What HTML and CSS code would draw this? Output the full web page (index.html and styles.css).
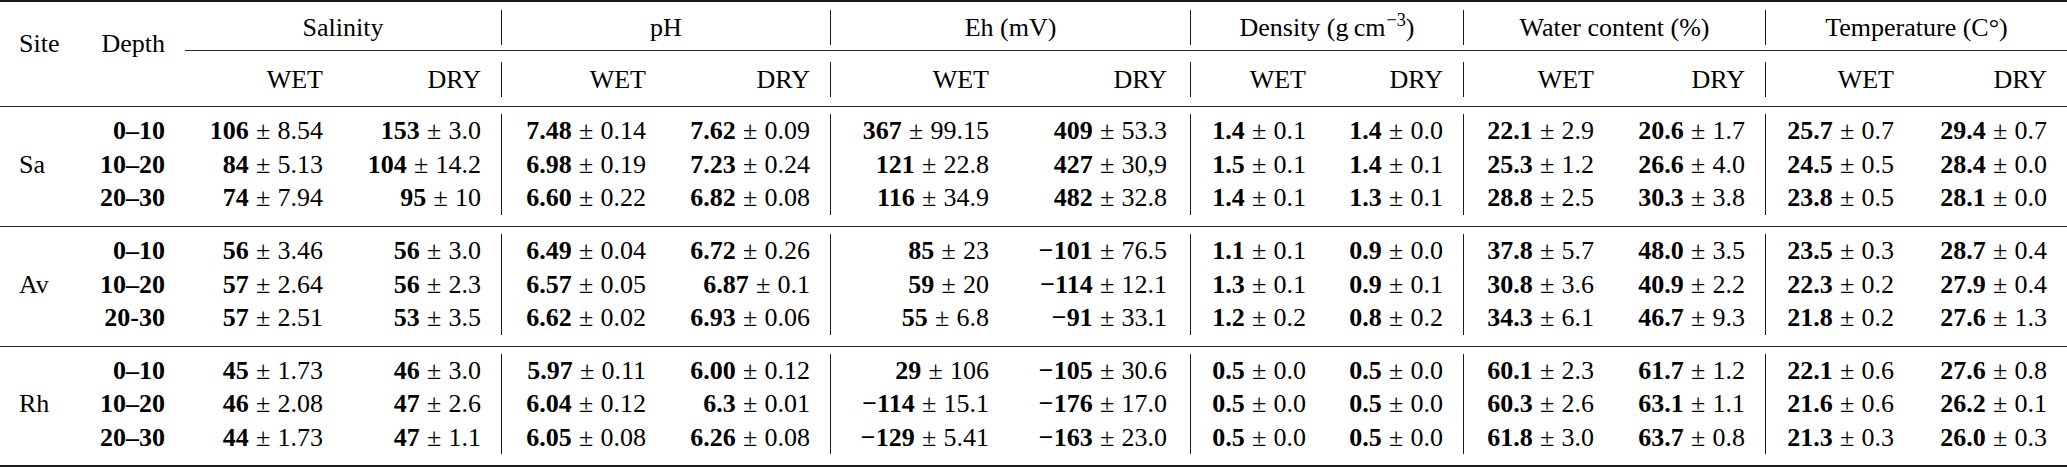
FILE: index.html
```html
<!DOCTYPE html>
<html lang="en">
<head>
<meta charset="utf-8">
<title>Soil parameters</title>
<link rel="stylesheet" href="styles.css">
</head>
<body>
<table class="tbl">
  <colgroup>
    <col class="w-site"><col class="w-depth">
    <col class="w-sal-w"><col class="w-sal-d">
    <col class="w-ph-w"><col class="w-ph-d">
    <col class="w-eh-w"><col class="w-eh-d">
    <col class="w-den-w"><col class="w-den-d">
    <col class="w-wat-w"><col class="w-wat-d">
    <col class="w-tmp-w"><col class="w-tmp-d">
  </colgroup>
  <thead>
    <tr class="rule rule-heavy"><td colspan="14"></td></tr>
    <tr class="gap gap-8"><td colspan="14"></td></tr>
    <tr class="head-1">
      <th rowspan="5" class="stub site">Site</th>
      <th rowspan="5" class="stub">Depth</th>
      <th colspan="2" class="group">Salinity</th>
      <th colspan="2" class="group vl">pH</th>
      <th colspan="2" class="group vl">Eh (mV)</th>
      <th colspan="2" class="group vl">Density (g&#8201;cm<sup>−3</sup>)</th>
      <th colspan="2" class="group vl">Water content (%)</th>
      <th colspan="2" class="group vl">Temperature (C°)</th>
    </tr>
    <tr class="gap gap-5"><td colspan="12"></td></tr>
    <tr class="rule rule-thin"><td colspan="12"></td></tr>
    <tr class="gap gap-11"><td colspan="12"></td></tr>
    <tr class="head-2">
      <th>WET</th><th>DRY</th>
      <th class="vl">WET</th><th>DRY</th>
      <th class="vl">WET</th><th class="eh-d">DRY</th>
      <th class="vl">WET</th><th>DRY</th>
      <th class="vl">WET</th><th>DRY</th>
      <th class="vl">WET</th><th>DRY</th>
    </tr>
    <tr class="gap gap-9"><td colspan="14"></td></tr>
  </thead>

  <tbody>
    <tr class="rule rule-mid"><td colspan="14"></td></tr>
    <tr class="gap gap-7"><td colspan="14"></td></tr>
    <tr>
      <td class="site"></td><td><b>0–10</b></td>
      <td><b>106</b><span class="pm">±</span>8.54</td><td><b>153</b><span class="pm">±</span>3.0</td>
      <td class="vl"><b>7.48</b><span class="pm">±</span>0.14</td><td><b>7.62</b><span class="pm">±</span>0.09</td>
      <td class="vl"><b>367</b><span class="pm">±</span>99.15</td><td class="eh-d"><b>409</b><span class="pm">±</span>53.3</td>
      <td class="vl"><b>1.4</b><span class="pm">±</span>0.1</td><td><b>1.4</b><span class="pm">±</span>0.0</td>
      <td class="vl"><b>22.1</b><span class="pm">±</span>2.9</td><td><b>20.6</b><span class="pm">±</span>1.7</td>
      <td class="vl"><b>25.7</b><span class="pm">±</span>0.7</td><td><b>29.4</b><span class="pm">±</span>0.7</td>
    </tr>
    <tr>
      <td class="site">Sa</td><td><b>10–20</b></td>
      <td><b>84</b><span class="pm">±</span>5.13</td><td><b>104</b><span class="pm">±</span>14.2</td>
      <td class="vl"><b>6.98</b><span class="pm">±</span>0.19</td><td><b>7.23</b><span class="pm">±</span>0.24</td>
      <td class="vl"><b>121</b><span class="pm">±</span>22.8</td><td class="eh-d"><b>427</b><span class="pm">±</span>30,9</td>
      <td class="vl"><b>1.5</b><span class="pm">±</span>0.1</td><td><b>1.4</b><span class="pm">±</span>0.1</td>
      <td class="vl"><b>25.3</b><span class="pm">±</span>1.2</td><td><b>26.6</b><span class="pm">±</span>4.0</td>
      <td class="vl"><b>24.5</b><span class="pm">±</span>0.5</td><td><b>28.4</b><span class="pm">±</span>0.0</td>
    </tr>
    <tr>
      <td class="site"></td><td><b>20–30</b></td>
      <td><b>74</b><span class="pm">±</span>7.94</td><td><b>95</b><span class="pm">±</span>10</td>
      <td class="vl"><b>6.60</b><span class="pm">±</span>0.22</td><td><b>6.82</b><span class="pm">±</span>0.08</td>
      <td class="vl"><b>116</b><span class="pm">±</span>34.9</td><td class="eh-d"><b>482</b><span class="pm">±</span>32.8</td>
      <td class="vl"><b>1.4</b><span class="pm">±</span>0.1</td><td><b>1.3</b><span class="pm">±</span>0.1</td>
      <td class="vl"><b>28.8</b><span class="pm">±</span>2.5</td><td><b>30.3</b><span class="pm">±</span>3.8</td>
      <td class="vl"><b>23.8</b><span class="pm">±</span>0.5</td><td><b>28.1</b><span class="pm">±</span>0.0</td>
    </tr>
    <tr class="gap gap-11"><td colspan="14"></td></tr>
  </tbody>

  <tbody>
    <tr class="rule rule-mid"><td colspan="14"></td></tr>
    <tr class="gap gap-7"><td colspan="14"></td></tr>
    <tr>
      <td class="site"></td><td><b>0–10</b></td>
      <td><b>56</b><span class="pm">±</span>3.46</td><td><b>56</b><span class="pm">±</span>3.0</td>
      <td class="vl"><b>6.49</b><span class="pm">±</span>0.04</td><td><b>6.72</b><span class="pm">±</span>0.26</td>
      <td class="vl"><b>85</b><span class="pm">±</span>23</td><td class="eh-d"><b>−101</b><span class="pm">±</span>76.5</td>
      <td class="vl"><b>1.1</b><span class="pm">±</span>0.1</td><td><b>0.9</b><span class="pm">±</span>0.0</td>
      <td class="vl"><b>37.8</b><span class="pm">±</span>5.7</td><td><b>48.0</b><span class="pm">±</span>3.5</td>
      <td class="vl"><b>23.5</b><span class="pm">±</span>0.3</td><td><b>28.7</b><span class="pm">±</span>0.4</td>
    </tr>
    <tr>
      <td class="site">Av</td><td><b>10–20</b></td>
      <td><b>57</b><span class="pm">±</span>2.64</td><td><b>56</b><span class="pm">±</span>2.3</td>
      <td class="vl"><b>6.57</b><span class="pm">±</span>0.05</td><td><b>6.87</b><span class="pm">±</span>0.1</td>
      <td class="vl"><b>59</b><span class="pm">±</span>20</td><td class="eh-d"><b>−114</b><span class="pm">±</span>12.1</td>
      <td class="vl"><b>1.3</b><span class="pm">±</span>0.1</td><td><b>0.9</b><span class="pm">±</span>0.1</td>
      <td class="vl"><b>30.8</b><span class="pm">±</span>3.6</td><td><b>40.9</b><span class="pm">±</span>2.2</td>
      <td class="vl"><b>22.3</b><span class="pm">±</span>0.2</td><td><b>27.9</b><span class="pm">±</span>0.4</td>
    </tr>
    <tr>
      <td class="site"></td><td><b>20-30</b></td>
      <td><b>57</b><span class="pm">±</span>2.51</td><td><b>53</b><span class="pm">±</span>3.5</td>
      <td class="vl"><b>6.62</b><span class="pm">±</span>0.02</td><td><b>6.93</b><span class="pm">±</span>0.06</td>
      <td class="vl"><b>55</b><span class="pm">±</span>6.8</td><td class="eh-d"><b>−91</b><span class="pm">±</span>33.1</td>
      <td class="vl"><b>1.2</b><span class="pm">±</span>0.2</td><td><b>0.8</b><span class="pm">±</span>0.2</td>
      <td class="vl"><b>34.3</b><span class="pm">±</span>6.1</td><td><b>46.7</b><span class="pm">±</span>9.3</td>
      <td class="vl"><b>21.8</b><span class="pm">±</span>0.2</td><td><b>27.6</b><span class="pm">±</span>1.3</td>
    </tr>
    <tr class="gap gap-11"><td colspan="14"></td></tr>
  </tbody>

  <tbody>
    <tr class="rule rule-mid"><td colspan="14"></td></tr>
    <tr class="gap gap-7"><td colspan="14"></td></tr>
    <tr>
      <td class="site"></td><td><b>0–10</b></td>
      <td><b>45</b><span class="pm">±</span>1.73</td><td><b>46</b><span class="pm">±</span>3.0</td>
      <td class="vl"><b>5.97</b><span class="pm">±</span>0.11</td><td><b>6.00</b><span class="pm">±</span>0.12</td>
      <td class="vl"><b>29</b><span class="pm">±</span>106</td><td class="eh-d"><b>−105</b><span class="pm">±</span>30.6</td>
      <td class="vl"><b>0.5</b><span class="pm">±</span>0.0</td><td><b>0.5</b><span class="pm">±</span>0.0</td>
      <td class="vl"><b>60.1</b><span class="pm">±</span>2.3</td><td><b>61.7</b><span class="pm">±</span>1.2</td>
      <td class="vl"><b>22.1</b><span class="pm">±</span>0.6</td><td><b>27.6</b><span class="pm">±</span>0.8</td>
    </tr>
    <tr>
      <td class="site">Rh</td><td><b>10–20</b></td>
      <td><b>46</b><span class="pm">±</span>2.08</td><td><b>47</b><span class="pm">±</span>2.6</td>
      <td class="vl"><b>6.04</b><span class="pm">±</span>0.12</td><td><b>6.3</b><span class="pm">±</span>0.01</td>
      <td class="vl"><b>−114</b><span class="pm">±</span>15.1</td><td class="eh-d"><b>−176</b><span class="pm">±</span>17.0</td>
      <td class="vl"><b>0.5</b><span class="pm">±</span>0.0</td><td><b>0.5</b><span class="pm">±</span>0.0</td>
      <td class="vl"><b>60.3</b><span class="pm">±</span>2.6</td><td><b>63.1</b><span class="pm">±</span>1.1</td>
      <td class="vl"><b>21.6</b><span class="pm">±</span>0.6</td><td><b>26.2</b><span class="pm">±</span>0.1</td>
    </tr>
    <tr>
      <td class="site"></td><td><b>20–30</b></td>
      <td><b>44</b><span class="pm">±</span>1.73</td><td><b>47</b><span class="pm">±</span>1.1</td>
      <td class="vl"><b>6.05</b><span class="pm">±</span>0.08</td><td><b>6.26</b><span class="pm">±</span>0.08</td>
      <td class="vl"><b>−129</b><span class="pm">±</span>5.41</td><td class="eh-d"><b>−163</b><span class="pm">±</span>23.0</td>
      <td class="vl"><b>0.5</b><span class="pm">±</span>0.0</td><td><b>0.5</b><span class="pm">±</span>0.0</td>
      <td class="vl"><b>61.8</b><span class="pm">±</span>3.0</td><td><b>63.7</b><span class="pm">±</span>0.8</td>
      <td class="vl"><b>21.3</b><span class="pm">±</span>0.3</td><td><b>26.0</b><span class="pm">±</span>0.3</td>
    </tr>
    <tr class="gap gap-11"><td colspan="14"></td></tr>
    <tr class="rule rule-heavy"><td colspan="14"></td></tr>
  </tbody>
</table>
</body>
</html>
```

FILE: styles.css
```css
html,
body {
  margin: 0;
  padding: 0;
  background: #ffffff;
}

body {
  font-family: "Liberation Serif", "Times New Roman", serif;
  color: #000000;
}

.tbl {
  border-collapse: separate;
  border-spacing: 0;
  table-layout: fixed;
  width: 2067px;
  font-size: 26px;
}

/* column widths */
.w-site { width: 80px; }
.w-depth { width: 105px; }
.w-sal-w { width: 158px; }
.w-sal-d { width: 158px; }
.w-ph-w { width: 165px; }
.w-ph-d { width: 164px; }
.w-eh-w { width: 179px; }
.w-eh-d { width: 181px; }
.w-den-w { width: 136px; }
.w-den-d { width: 137px; }
.w-wat-w { width: 151px; }
.w-wat-d { width: 151px; }
.w-tmp-w { width: 149px; }
.w-tmp-d { width: 153px; }

.tbl th,
.tbl td {
  padding: 0 20px 0 0;
  text-align: right;
  font-weight: 400;
  line-height: 33.5px;
  white-space: nowrap;
  vertical-align: middle;
}

.tbl b {
  font-weight: 700;
}

.tbl .site {
  text-align: left;
  padding: 0 0 0 19px;
}

.tbl .eh-d {
  padding-right: 23px;
}

.tbl .vl {
  border-left: 1px solid #1c1c1c;
}

.pm {
  margin: 0 0.28em;
}

.tbl sup {
  font-size: 0.7em;
  line-height: 0;
  vertical-align: 0.55em;
  margin-left: 1px;
}

/* header rows */
.head-1 th,
.head-2 th {
  height: 35px;
  line-height: 35px;
}

.head-1 .group {
  text-align: center;
  padding: 0;
}

.head-1 .stub {
  vertical-align: top;
  padding-top: 17px;
  line-height: 33.5px;
}

/* spacing and rules */
.gap td,
.rule td {
  padding: 0;
  font-size: 0;
  line-height: 0;
}

.gap-5 td { height: 5px; }
.gap-7 td { height: 7px; }
.gap-8 td { height: 8px; }
.gap-9 td { height: 9px; }
.gap-11 td { height: 11px; }

.rule-heavy td {
  height: 2px;
  background: #1a1a1a;
}

.rule-mid td {
  height: 1.3px;
  background: #222222;
}

.rule-thin td {
  height: 1px;
  background: #2a2a2a;
}
```
